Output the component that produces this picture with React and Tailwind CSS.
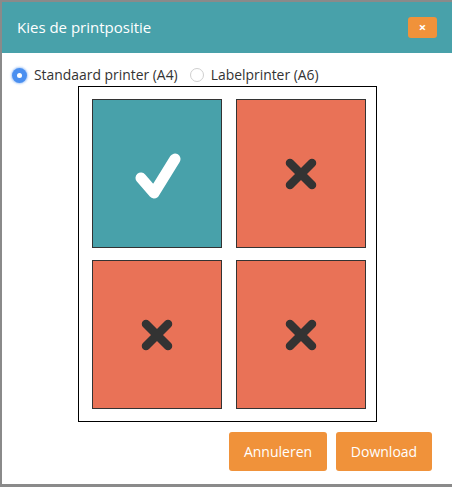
import React from 'react';

const OPEN = { fontFamily: '"Open Sans", "Liberation Sans", sans-serif' };

function CheckMark() {
  return (
    <svg width="52" height="52" viewBox="0 0 52 52">
      <path d="M10 30 L23 45 L44 11" fill="none" stroke="#fff" strokeWidth="11" strokeLinecap="round" strokeLinejoin="round" />
    </svg>
  );
}

function Cross() {
  return (
    <svg width="34" height="34" viewBox="0 0 34 34">
      <path d="M6 6 L28 28 M28 6 L6 28" fill="none" stroke="#333" strokeWidth="8.5" strokeLinecap="round" />
    </svg>
  );
}

function Tile({ ok }) {
  return (
    <div
      className={`w-[130px] h-[149px] border border-[#333] flex items-center justify-center ${
        ok ? 'bg-[#48a1aa]' : 'bg-[#e97257]'
      }`}
    >
      {ok ? <CheckMark /> : <Cross />}
    </div>
  );
}

function Radio({ checked, label }) {
  return (
    <label className="flex items-center gap-[7px]">
      {checked ? (
        <span className="w-[15px] h-[15px] rounded-full bg-[#4a8ff0] shadow-[0_0_2px_1px_rgba(74,143,240,0.45)] flex items-center justify-center">
          <span className="w-[5px] h-[5px] rounded-full bg-white" />
        </span>
      ) : (
        <span className="w-[14px] h-[14px] rounded-full border border-[#cfcfcf] bg-white" />
      )}
      <span className="text-[13.9px] text-[#333]">{label}</span>
    </label>
  );
}

export default function App() {
  return (
    <div className="w-[452px] h-[487px] bg-[#8a8a8a] pt-[2px] pl-[2px] overflow-hidden" style={OPEN}>
      <div className="w-[450px] h-[482px] bg-white flex flex-col">
        {/* Kop */}
        <div className="h-[51px] bg-[#48a1aa] flex items-center justify-between pl-[15px] pr-[15px]">
          <span className="text-white text-[15px]">Kies de printpositie</span>
          <button className="w-[29px] h-[21px] rounded-[3px] bg-[#f0923a] text-white text-[13px] font-bold leading-none flex items-center justify-center">
            ×
          </button>
        </div>

        {/* Printer keuze */}
        <div className="flex items-center gap-[12px] pl-[10px] mt-[12px] h-[20px]">
          <Radio checked label="Standaard printer (A4)" />
          <Radio label="Labelprinter (A6)" />
        </div>

        {/* Pagina */}
        <div className="mx-auto mt-[1px] w-[299px] border border-black pt-[12px] pb-[12px] pl-[13px] pr-[11px]">
          <div className="grid grid-cols-2 gap-x-[16px] gap-y-[12px]">
            <Tile ok />
            <Tile />
            <Tile />
            <Tile />
          </div>
        </div>

        {/* Knoppen */}
        <div className="flex justify-end gap-[9px] pr-[20px] mt-[10px]">
          <button className="w-[98px] h-[39px] rounded-[3px] bg-[#f0923a] text-white text-[14px]">Annuleren</button>
          <button className="w-[96px] h-[39px] rounded-[3px] bg-[#f0923a] text-white text-[14px]">Download</button>
        </div>
      </div>
    </div>
  );
}
